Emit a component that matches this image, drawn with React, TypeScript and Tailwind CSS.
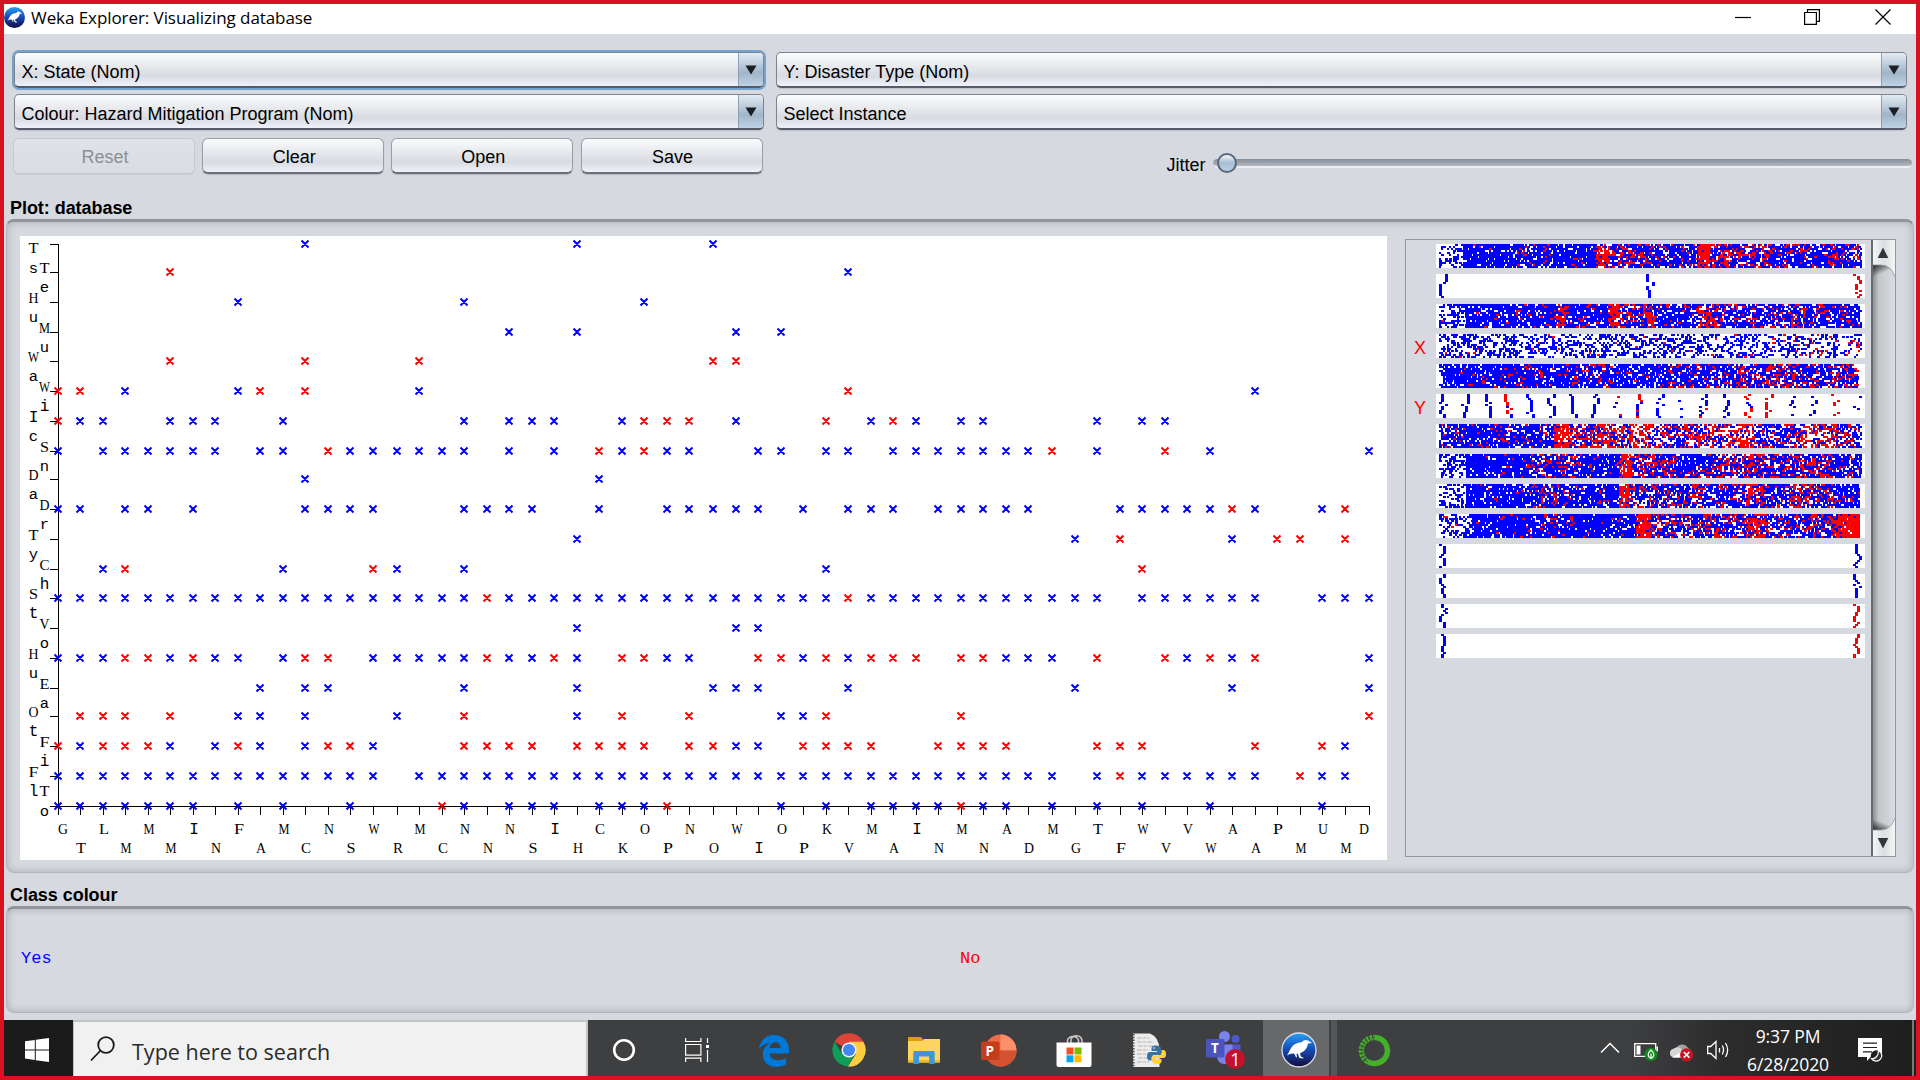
import React from "react";

type Run = [number, number, "B" | "R"];

const rowY = [244, 272, 302, 332, 361, 391, 421, 451, 479, 509, 539, 569, 598, 628, 658, 688, 716, 746, 776, 806];
const colX = Array.from({ length: 59 }, (_, i) => Math.ceil(Math.floor(39 + (i * 874) / 58) * 1.5) - 1);

// Each row lists its columns; "a-b" is a range, a trailing "r" marks the class "No".
const points = [
  "11 23 29",
  "5r 35",
  "8 18 26",
  "20 23 30 32",
  "5r 11r 16r 29r 30r",
  "0r 1r 3 8 9r 11r 16 35r 53",
  "0r 1 2 5-7 10 18 20-22 25 26r-28r 30 34r 36 37r 38 40 41 46 48 49",
  "0 2-7 9 10 12r 13-18 20 22 24r 25 26r 27 28 31 32 34 35 37-43 44r 46 49r 51 58",
  "11 24",
  "0 1 3 4 6 11-14 18-21 24 27-31 33 35-37 39-43 47-51 52r 53 56 57r",
  "23 45 47r 52 54r 55r 57r",
  "2 3r 10 14r 15 18 34 48r",
  "0-18 19r 20-34 35r 36-46 48-53 56-58",
  "23 30 31",
  "0-2 3r 4r 5 6r 7 8 10 11r 12r 14-18 19r 20 21 22r 23 25r 26r 27 28 31r 32r 33 34r 35 36r-38r 40r 41r 42-44 46r 49r 50 51r 52 53r 58",
  "9 11 12 18 23 29-31 35 45 52 58",
  "1r-3r 5r 8 9 11 15 18r 23 25r 28r 32 33 34r 40r 58r",
  "0r 1 2r-4r 5 7 8r 9 11 12r 13r 14 18r-21r 23r-26r 28r 29r 30 31 33r-36r 39r-42r 46r-48r 53r 56r 57",
  "0-14 16-44 46 47r 48-53 55r 56 57",
  "0-6 8 10 13 17r 18 20-22 24-26 27r 32 34 36-39 40r 41 42 44 46 48 51 56",
];

function parseRow(s: string): Run[] {
  return s.split(" ").map((t) => {
    const c = t.includes("r") ? "R" : "B";
    const [a, b] = t.replace(/r/g, "").split("-").map(Number);
    return [a, b ?? a, c];
  });
}

const xLetters = "GTLMMMINFAMCNSWRMCNNNSIHCKOPNOWIOPKVMAINMNADMGTFWVVWAAPMUMD";
const yLabels = ["Ts", "Te", "Hu", "Mu", "Wa", "Wi", "Ic", "Sn", "Da", "Dr", "Ty", "Ch", "St", "Vo", "Hu", "Ea", "Ot", "Fi", "Fl", "To"];

// Capitals are set in the serif at a fixed advance; narrow and lowercase letters use the slab forms of the mono face.
function Glyph({ ch, x, y }: { ch: string; x: number; y: number }) {
  if (/[a-zI]/.test(ch)) {
    return (
      <text x={x + 0.2} y={y} fontFamily="'Liberation Mono', monospace" fontSize={/[aceosunry]/.test(ch) ? 15.5 : 16}>
        {ch}
      </text>
    );
  }
  const w = ch === "S" ? 9 : ch === "M" || ch === "W" ? 11 : 10;
  return (
    <text x={x + (10 - w) / 2} y={y} textLength={w} lengthAdjust="spacingAndGlyphs">
      {ch}
    </text>
  );
}

function Plot() {
  const marks: { B: string; R: string } = { B: "", R: "" };
  points.forEach((s, r) => {
    parseRow(s).forEach(([a, b, c]) => {
      for (let i = a; i <= b; i++) {
        const x = colX[i] - 4;
        const y = rowY[r] - 4;
        marks[c] += `M${x + 0.5} ${y + 0.5}l7 7M${x + 7.5} ${y + 0.5}l-7 7`;
      }
    });
  });
  return (
    <svg width="1367" height="624" viewBox="20 236 1367 624" className="block shrink-0 bg-white">
      <g shapeRendering="crispEdges" fill="#000">
        <rect x="58" y="244" width="1" height="563" />
        <rect x="50" y="806" width="1320" height="1" />
        {rowY.map((y) => (
          <rect key={y} x="50" y={y} width="8" height="1" />
        ))}
        {colX.map((x) => (
          <rect key={x} x={x} y="806" width="1" height="9" />
        ))}
      </g>
      <path d={marks.B} stroke="#0000ff" strokeWidth="2" />
      <path d={marks.R} stroke="#ff0000" strokeWidth="2" />
      <g fontFamily="'Liberation Serif', serif" fontSize="15.500" fill="#000">
        {xLetters.split("").map((ch, i) => (
          <Glyph key={i} ch={ch} x={i === 0 ? 58 : i === 58 ? 1359 : colX[i] - 4} y={i % 2 ? 853 : 834} />
        ))}
        {yLabels.map((l, r) => {
          const x = r % 2 ? 39.5 : 28.5;
          const y = r === 0 ? 253 : r === 19 ? 796 : rowY[r] + 0.5;
          return (
            <React.Fragment key={r}>
              <Glyph ch={l[0]} x={x} y={y} />
              <Glyph ch={l[1]} x={x} y={y + 19.5} />
            </React.Fragment>
          );
        })}
      </g>
    </svg>
  );
}

function rng(seed: number) {
  let a = seed;
  return () => {
    a = (a + 0x6d2b79f5) | 0;
    let t = Math.imul(a ^ (a >>> 15), 1 | a);
    t = (t + Math.imul(t ^ (t >>> 7), 61 | t)) ^ t;
    return ((t ^ (t >>> 14)) >>> 0) / 4294967296;
  };
}

// Dense strips: stops of [x, fill, share of red]; each stop holds until the next one.
type Strip = { kind: "dense"; stops: [number, number, number][] } | { kind: "cols"; cols: [number, number, number][] };

const strips: Strip[] = [
  { kind: "dense", stops: [[3, 0.45, 0], [27, 0.86, 0.01], [75, 0.8, 0.1], [115, 0.85, 0.05], [160, 0.8, 0.75], [174, 0.78, 0.3], [205, 0.82, 0.18], [262, 0.92, 0.85], [274, 0.78, 0.3], [330, 0.8, 0.15], [405, 0.65, 0.2], [424, 0.4, 0.1]] },
  { kind: "cols", cols: [[3, 1, 0], [210, 1, 0.1], [417, 1, 1]] },
  { kind: "dense", stops: [[3, 0.45, 0.02], [30, 0.86, 0.02], [82, 0.82, 0.08], [122, 0.85, 0.6], [130, 0.82, 0.1], [172, 0.8, 0.6], [186, 0.72, 0.3], [205, 0.85, 0.6], [218, 0.78, 0.12], [262, 0.78, 0.5], [282, 0.76, 0.15], [355, 0.78, 0.4], [368, 0.8, 0.12], [424, 0.3, 0]] },
  { kind: "dense", stops: [[3, 0.42, 0.01], [90, 0.36, 0.08], [125, 0.4, 0.02], [290, 0.34, 0.08], [345, 0.3, 0.12], [400, 0.26, 0.25], [424, 0.2, 0]] },
  { kind: "dense", stops: [[3, 0.5, 0], [10, 0.85, 0.02], [62, 0.85, 0.1], [110, 0.82, 0.07], [160, 0.82, 0.2], [176, 0.78, 0.06], [230, 0.78, 0.14], [300, 0.78, 0.3], [360, 0.78, 0.22], [422, 0, 0]] },
  { kind: "cols", cols: [[3, 1, 0], [25, 1, 0], [47, 1, 0.05], [68, 1, 0.65], [90, 1, 0], [111, 1, 0], [133, 1, 0], [155, 1, 0], [177, 0.6, 0.4], [198, 1, 0.6], [220, 0.8, 0], [242, 0.3, 0.2], [263, 1, 0.3], [285, 0.8, 0], [308, 0.9, 0.75], [329, 0.9, 1], [351, 0.5, 0], [373, 0.45, 0], [395, 0.4, 1], [417, 0.4, 0]] },
  { kind: "dense", stops: [[3, 0.7, 0.15], [17, 0.85, 0.05], [50, 0.78, 0.15], [75, 0.76, 0.08], [118, 0.8, 0.85], [132, 0.7, 0.4], [155, 0.72, 0.7], [175, 0.7, 0.35], [195, 0.45, 0.85], [212, 0.6, 0.3], [250, 0.56, 0.5], [300, 0.62, 0.75], [318, 0.66, 0.2], [365, 0.55, 0.6], [400, 0.62, 0.2], [424, 0.3, 0.5]] },
  { kind: "dense", stops: [[3, 0.4, 0], [30, 0.9, 0.02], [85, 0.78, 0.2], [110, 0.8, 0.1], [130, 0.78, 0.25], [145, 0.82, 0.05], [183, 0.85, 0.85], [194, 0.78, 0.3], [240, 0.82, 0.1], [280, 0.76, 0.3], [340, 0.78, 0.28], [395, 0.75, 0.15], [424, 0.3, 0]] },
  { kind: "dense", stops: [[3, 0.4, 0], [30, 0.88, 0.02], [85, 0.82, 0.15], [135, 0.82, 0.05], [183, 0.88, 0.88], [193, 0.7, 0.25], [250, 0.72, 0.2], [310, 0.78, 0.5], [325, 0.76, 0.2], [355, 0.78, 0.5], [375, 0.76, 0.22], [400, 0.8, 0.1], [424, 0.2, 0]] },
  { kind: "dense", stops: [[3, 0.4, 0.02], [36, 0.9, 0.02], [100, 0.84, 0.15], [135, 0.88, 0.05], [200, 0.88, 0.85], [213, 0.76, 0.25], [270, 0.7, 0.25], [310, 0.78, 0.6], [330, 0.74, 0.2], [375, 0.78, 0.35], [398, 0.85, 0.7], [410, 0.93, 0.93], [424, 0, 0]] },
  { kind: "cols", cols: [[3, 1, 0], [417, 1, 0.08]] },
  { kind: "cols", cols: [[3, 1, 0], [417, 1, 0]] },
  { kind: "cols", cols: [[3, 1, 0], [417, 1, 1]] },
  { kind: "cols", cols: [[3, 1, 0], [417, 1, 1]] },
];

function AttributeStrip({ strip, seed }: { strip: Strip; seed: number }) {
  const rand = rng(seed * 7919 + 13);
  let blue = "";
  let red = "";
  const put = (x: number, y: number, w: number, isRed: boolean) => {
    const d = `M${x} ${y}h${w}v2h${-w}z`;
    if (isRed) red += d;
    else blue += d;
  };
  if (strip.kind === "dense") {
    strip.stops.forEach(([x0, fill, share], i) => {
      const x1 = i + 1 < strip.stops.length ? strip.stops[i + 1][0] : 426;
      for (let x = x0; x < x1; x += 2) {
        for (let y = 0; y < 24; y += 2) {
          if (rand() < fill) put(x, y, x < 422 && rand() < 0.5 ? 3 : 2, rand() < share);
        }
      }
    });
  } else {
    strip.cols.forEach(([x0, fill, share]) => {
      let isRed = rand() < share;
      let dx = Math.floor(rand() * 4) * 2;
      for (let y = 0; y < 24; y += 2) {
        if (rand() < 0.4) isRed = rand() < share;
        if (rand() < 0.6) dx = Math.floor(rand() * 4) * 2;
        if (rand() < fill) put(x0 + dx, y, 3, isRed);
      }
    });
  }
  return (
    <svg width="429" height="24" className="block bg-white" shapeRendering="crispEdges">
      <path d={blue} fill="#0000ff" />
      <path d={red} fill="#ff0000" />
    </svg>
  );
}

function Combo({ label, focused = false }: { label: string; focused?: boolean }) {
  return (
    <div
      className={`flex h-9 items-stretch overflow-hidden rounded-[5px] border border-b-2 border-[#7f848c] border-b-[#545b66] bg-linear-to-b from-[#fcfcfd] via-[#d8dbe1] via-70% to-[#eff2fa] ${
        focused ? "shadow-[0_0_0_2px_#73a4d1]" : "shadow-[0_1px_1px_#bcc0c8]"
      }`}
    >
      <span className="flex-1 pt-[4px] pl-[7px] text-[18px] leading-[30px] whitespace-nowrap text-black">{label}</span>
      <span className="flex w-[25px] justify-center border-l border-[#8ba0b5] bg-linear-to-b from-[#e3ecf4] via-[#a1b5c9] via-60% to-[#bfd3e7] pt-[12px]">
        <svg width="12" height="10" viewBox="0 0 12 10">
          <path d="M0.5 0.5h11l-5.500 9z" fill="#1b1f24" />
        </svg>
      </span>
    </div>
  );
}

function Button({ label, disabled = false }: { label: string; disabled?: boolean }) {
  return disabled ? (
    <button className="h-9 w-[182px] rounded-md border border-[#c5c8ce] bg-linear-to-b from-[#dfe2e7] to-[#d9dce3] pt-[2px] pl-[2px] text-[18px] leading-[32px] text-[#8e8f91] shadow-[0_1px_0_#c9ccd2]">
      {label}
    </button>
  ) : (
    <button className="h-9 w-[182px] rounded-md border border-b-2 border-[#9a9da3] border-b-[#6c6f76] bg-linear-to-b from-[#fbfbfc] via-[#d8dbe1] via-70% to-[#eff2fa] pt-[3px] pl-[2px] text-[18px] leading-[30px] text-black shadow-[0_1px_1px_#b9bcc3]">
      {label}
    </button>
  );
}

function WekaIcon({ size, ring = false }: { size: number; ring?: boolean }) {
  const id = `weka${size}`;
  return (
    <svg width={size} height={size} viewBox="0 0 36 36">
      <defs>
        <linearGradient id={id} x1="0" y1="0" x2="0" y2="1">
          <stop offset="0" stopColor="#27a0f5" />
          <stop offset="0.5" stopColor="#1848b4" />
          <stop offset="1" stopColor="#130b38" />
        </linearGradient>
      </defs>
      <circle cx="18" cy="18" r={ring ? 17 : 18} fill={`url(#${id})`} stroke={ring ? "#d8dbe0" : "none"} strokeWidth="1.300" />
      <path
        d="M6 23.500c2-3 3-7 6-10 3-2.600 6-2.600 9-3.400 1.500-2.200 4-2.800 6-1.600l4 2.600-4 .3c-.6 3.600-2.400 7.300-6.500 9l-1.500.8.8 3.300 2.700 1.200-.2.900-4-.6-1.300-4.300-1.500.1.500 3.300-.9.300-1.900-3.800c-2.500-.5-5 .3-7.200 1.900z"
        fill="#fff"
      />
    </svg>
  );
}

function TaskIcon({ children, active = false }: { children: React.ReactNode; active?: boolean }) {
  return active ? (
    <div className="flex h-full w-[75px] justify-start">
      <div className="flex h-full w-[66px] items-center justify-center bg-[#67686a] pt-1 pl-[5px]">{children}</div>
      <div className="ml-[2px] h-full w-[6px] bg-[#555658]" />
    </div>
  ) : (
    <div className="flex h-full w-[75px] items-center justify-center pt-1 pr-[3px]">{children}</div>
  );
}

function Taskbar() {
  return (
    <div className="flex h-14 shrink-0 bg-linear-to-r from-[#3e3f41] from-85% via-[#2c2c2d] via-90% to-[#1e1e1e] font-['Open_Sans','Noto_Sans',sans-serif]">
      <div className="flex w-[69px] items-center justify-center bg-[#1b1b1b] pt-1 pr-[4px]">
        <svg width="24" height="24" viewBox="0 0 24 24" fill="#fff">
          <path d="M0 3.300 9.800 2v9.400H0zM10.800 1.800 24 0v11.400H10.800zM0 12.400h9.800V22L0 20.600zM10.800 12.400H24V24l-13.200-1.800z" />
        </svg>
      </div>
      <div className="flex w-[515px] items-center border-t-2 border-r-2 border-l border-[#c4c4c4] bg-[#f1f1f1]">
        <svg width="26" height="26" viewBox="0 0 26 26" className="ml-[16px]" fill="none" stroke="#1a1a1a" strokeWidth="1.800">
          <circle cx="16" cy="9" r="7.800" />
          <path d="M10.500 14.500 1 24.500" />
        </svg>
        <span className="ml-[16px] pt-[6px] text-[21.500px] tracking-[0.020px] text-[#2b2b2b]">Type here to search</span>
      </div>
      <TaskIcon>
        <svg width="24" height="24" viewBox="0 0 24 24">
          <circle cx="12" cy="12" r="9.800" fill="none" stroke="#fff" strokeWidth="2.600" />
        </svg>
      </TaskIcon>
      <TaskIcon>
        <svg width="25" height="24" viewBox="0 0 25 24" className="mr-[4px]" fill="none" stroke="#fff" strokeWidth="1.200">
          <path d="M.6 0v3.500h15.300V0M.6 6.500h15.300v10.600H.6zM.6 24v-3.900h15.300V24M22.500 0v5M22.500 12v12" />
          <path d="M21 7h3v3h-3z" fill="#fff" stroke="none" />
        </svg>
      </TaskIcon>
      <TaskIcon>
        <svg width="32" height="33" viewBox="0 0 32 33">
          <path
            d="M1 14.500C2.500 5.500 8.500 1 16.500 1 25.500 1 31 7.500 31 16v3.500H11.500c.3 4.500 4 6.700 8.500 6.700 3 0 5.700-.8 8.200-2.200v6.600C25.500 32.200 22 33 18.500 33 10 33 4.800 28 4.800 20.500 4.800 15.500 7.500 11.500 12 9.300 7.500 9.500 3.600 11.500 1 14.500zM11.500 14h11c0-3.500-1.700-5.800-5-5.800-3.200 0-5.400 2.300-6 5.800z"
            fill="#0078d7"
          />
        </svg>
      </TaskIcon>
      <TaskIcon>
        <svg width="34" height="34" viewBox="0 0 34 34">
          <path d="M17 17 2.600 8.700A16.600 16.600 0 0 1 31.400 8.700z" fill="#db4437" />
          <path d="M2.600 8.700A16.600 16.600 0 0 0 16 33.600L23.500 20 9.500 20z" fill="#0f9d58" />
          <path d="M31.400 8.700H17l7 12L16 33.600A16.600 16.600 0 0 0 31.400 8.700z" fill="#ffcd40" />
          <circle cx="17" cy="17" r="7.600" fill="#f1f1f1" />
          <circle cx="17" cy="17" r="6.100" fill="#4285f4" />
        </svg>
      </TaskIcon>
      <TaskIcon>
        <svg width="32" height="27" viewBox="0 0 32 27">
          <path d="M0 0h13l2 2.500V6H0z" fill="#e09c00" />
          <path d="M0 4h14l2-2h16v23.500H0z" fill="#ffd45e" />
          <path d="M0 23h32v2.500H0z" fill="#eeb92c" />
          <path d="M5.300 27V15.500a1.500 1.500 0 0 1 1.500-1.500h18.400a1.500 1.500 0 0 1 1.500 1.500V27h-5.500v-7.500H11V27z" fill="#3a96dd" />
        </svg>
      </TaskIcon>
      <TaskIcon>
        <svg width="36" height="33" viewBox="0 0 36 33">
          <circle cx="19.500" cy="16.500" r="16" fill="#ed6c47" />
          <path d="M19.500.5a16 16 0 0 1 16 16h-16z" fill="#ff8f6b" />
          <path d="M35.500 16.500a16 16 0 0 1-31 5.500l15-5.500z" fill="#d35230" />
          <rect x="0" y="7.500" width="18.500" height="18.500" rx="1.500" fill="#c43e1c" />
          <text x="4.500" y="21.500" fontSize="13.500" fontWeight="700" fill="#fff" fontFamily="'Open Sans', sans-serif">P</text>
        </svg>
      </TaskIcon>
      <TaskIcon>
        <svg width="36" height="35" viewBox="0 0 36 35">
          <path d="M11.500 10V7a6 6 0 0 1 11 0v3M15 10V6a6 6 0 0 1 11 1v3" fill="none" stroke="#c9c9c9" strokeWidth="1.500" />
          <path d="M.5 9.500h35V32a2 2 0 0 1-2 2h-31a2 2 0 0 1-2-2z" fill="#fff" />
          <path d="M10.500 14.500h7v7h-7z" fill="#f25022" />
          <path d="M18.500 14.500h7v7h-7z" fill="#7fba00" />
          <path d="M10.500 22.300h7v7h-7z" fill="#00a4ef" />
          <path d="M18.500 22.300h7v7h-7z" fill="#ffb900" />
        </svg>
      </TaskIcon>
      <TaskIcon>
        <svg width="34" height="35" viewBox="0 0 34 35">
          <path d="M1 .5h17q9 3.500 9.500 16V34H1z" fill="#ececec" />
          <path d="M1.500 1v33" stroke="#444" strokeWidth="2" strokeDasharray="1.400 1.400" />
          <path d="M5 5h12M5 9h17M6 13h15M5 17h11M5 21h9M6 25h9M5 29h12" stroke="#b5b5b5" strokeWidth="1" strokeDasharray="5 1 3 1" />
          <path d="M24 12.500c-4 0-4.500 1.500-4.500 3V18H25v1h-7c-2.500 0-3 2-3 4.500s1 4 3 4h1.500v-2.500c0-2 1.500-3 3-3h4.500c1.500 0 2-1 2-2.500v-4c0-2-1.500-3-5-3z" fill="#3672a4" />
          <path d="M25 31c4 0 4.500-1.500 4.500-3v-2H24v-1h7c2.500 0 3-1.500 3-4s-1-4-3-4h-1.500v2.500c0 2-1.500 3-3 3H22c-1.500 0-2 1-2 2.500v3c0 2 1.500 3 5 3z" fill="#ffd43b" />
          <circle cx="22" cy="15" r="0.800" fill="#fff" />
        </svg>
      </TaskIcon>
      <TaskIcon>
        <svg width="39" height="38" viewBox="0 0 39 38" className="ml-[3px]">
          <circle cx="18.500" cy="5.500" r="5.500" fill="#7b83eb" />
          <circle cx="29.500" cy="8" r="4" fill="#5059c9" />
          <path d="M24 13.500h10.500V22q-1 6-6 6L24 26z" fill="#5059c9" />
          <path d="M11 13.500h15.500V25q-1 8-8 8-6.500 0-7.500-7z" fill="#7b83eb" />
          <rect x="0" y="8" width="18.500" height="18.500" rx="1.500" fill="#4b53bc" />
          <text x="5" y="22" fontSize="13.500" fontWeight="700" fill="#fff" fontFamily="'Open Sans', sans-serif">T</text>
          <circle cx="29" cy="28" r="9.900" fill="#c4112f" />
          <text x="24.300" y="34.500" fontSize="18" fill="#fff" fontFamily="'Open Sans', sans-serif">1</text>
        </svg>
      </TaskIcon>
      <TaskIcon active>
        <WekaIcon size={36} ring />
      </TaskIcon>
      <TaskIcon>
        <svg width="33" height="33" viewBox="0 0 33 33" fill="none">
          <path d="M16.500 3.500a13 13 0 1 1-7 24" stroke="#43b02a" strokeWidth="5.500" />
          <path d="M9.500 27.500a13 13 0 0 1 7-24" stroke="#43b02a" strokeWidth="5.500" strokeDasharray="2.600 1" />
          <path d="M9.500 27.500a13 13 0 0 1 7-24" stroke="#3e3f41" strokeWidth="1" strokeDasharray="1.500 1.500" />
        </svg>
      </TaskIcon>
      <div className="ml-auto flex items-center pt-[4px]">
        <svg width="20" height="12" viewBox="0 0 20 12" className="mb-[4px]" fill="none" stroke="#fff" strokeWidth="1.500">
          <path d="m1 10.500 9-9 9 9" />
        </svg>
        <svg width="26" height="20" viewBox="0 0 26 20" className="mt-[2px] ml-[14px]">
          <path d="M.7 2.700h21v12.600H.7zM23.300 5.500v5" fill="none" stroke="#fff" strokeWidth="1.300" />
          <path d="M2.500 4.500h4v9h-4z" fill="#fff" />
          <circle cx="17" cy="13.300" r="6.500" fill="#0f8a1d" />
          <path d="M17 17.500c-4-2-3.500-5.500 0-8.500 3.500 3 4 6.500 0 8.500zm0 0v-5" fill="none" stroke="#fff" strokeWidth="1.200" />
        </svg>
        <svg width="25" height="21" viewBox="0 0 25 21" className="mt-[2px] ml-[9px]">
          <path d="M7 8a6.500 6.500 0 0 1 12-1c3 1 3 4 2 7H8z" fill="#a2a2a2" />
          <path d="M4.500 16.500a4.500 4.500 0 0 1 0-8.800 5.500 5.500 0 0 1 8.500 1l4 7.800z" fill="#d6d6d6" />
          <path d="M3 16.500l11-6.500 4 6.500z" fill="#fff" />
          <circle cx="17.600" cy="13.800" r="6.600" fill="#cf1126" />
          <path d="m14.800 11 5.600 5.600m0-5.600-5.600 5.600" stroke="#fff" strokeWidth="1.500" />
        </svg>
        <svg width="24" height="20" viewBox="0 0 24 20" className="ml-[13px]" fill="none" stroke="#fff" strokeWidth="1.300">
          <path d="M.7 6.500h3L9 1.500v17l-5.300-5H.7zM12.500 8v4.500M15.300 5.500q2.500 4.500 0 9M18.500 3q4.300 7 0 14" />
        </svg>
        <div className="ml-[12px] flex h-[52px] w-[90px] flex-col items-center text-[17.500px] tracking-[-0.100px] whitespace-nowrap text-white">
          <span className="h-[28px] leading-[24px]">9:37 PM</span>
          <span className="h-[24px] leading-[24px]">6/28/2020</span>
        </div>
        <svg width="25" height="25" viewBox="0 0 25 25" className="ml-[25px]">
          <path d="M0 0h24v19H12.500L9 23v-4H0z" fill="#fff" />
          <path d="M5 5.200h14M5 9.500h14M5 13.800h9" stroke="#1e1e1e" strokeWidth="1.200" />
          <circle cx="18.500" cy="18" r="5.800" fill="#1e1e1e" />
          <path d="M20.500 12.500a5.600 5.600 0 1 1-7 8.200c4 .5 7-3 7-8.200z" fill="#333" stroke="#fff" strokeWidth="1.200" />
        </svg>
        <div className="mt-[-4px] mr-[2px] ml-[29px] h-14 w-[2px] bg-[#77787a]" />
      </div>
    </div>
  );
}

function ScrollBar() {
  return (
    <div className="flex w-[24px] flex-col border-l-2 border-[#696b70] bg-linear-to-r from-[#8f9094] via-[#c4c5c8] via-25% to-[#d9dce1]">
      <svg width="22" height="40" viewBox="0 0 22 40" className="block shrink-0">
        <defs>
          <linearGradient id="trackTop" x1="0" y1="25" x2="7" y2="40" gradientUnits="userSpaceOnUse">
            <stop offset="0" stopColor="#2b2c2f" />
            <stop offset="0.700" stopColor="#2b2c2f" stopOpacity="0" />
          </linearGradient>
          <linearGradient id="arrowFace" x1="0" x2="1">
            <stop offset="0" stopColor="#f4f5f6" />
            <stop offset="0.500" stopColor="#dcdee1" />
            <stop offset="1" stopColor="#f4f5f6" />
          </linearGradient>
        </defs>
        <path d="M0 25h22v15H0z" fill="url(#trackTop)" />
        <path d="M0 0h22v37q-4-12-14-12H0z" fill="url(#arrowFace)" />
        <path d="M0 25h8q10 0 14 12" fill="none" stroke="#8f9094" strokeWidth="0.800" />
        <path d="m10 7.500 5.300 10.500H4.700z" fill="#333639" />
      </svg>
      <div className="flex-1" />
      <svg width="22" height="38" viewBox="0 0 22 38" className="block shrink-0">
        <defs>
          <linearGradient id="trackBottom" x1="0" y1="12" x2="4" y2="2" gradientUnits="userSpaceOnUse">
            <stop offset="0" stopColor="#2b2c2f" />
            <stop offset="1" stopColor="#2b2c2f" stopOpacity="0" />
          </linearGradient>
        </defs>
        <path d="M0 0h22L18 12H0z" fill="url(#trackBottom)" />
        <path d="M0 38h22V0q-4 12-14 12H0z" fill="url(#arrowFace)" />
        <path d="M0 12h8Q18 12 22 0" fill="none" stroke="#9a9b9f" strokeWidth="0.800" />
        <path d="m10 30.500 5.300-10.500H4.700z" fill="#333639" />
      </svg>
    </div>
  );
}

export default function App() {
  return (
    <div className="flex h-[1080px] w-[1920px] flex-col overflow-hidden border-4 border-[#d81221] bg-[#d6d9e0] font-['Liberation_Sans',Arial,sans-serif] text-black">
      <header className="flex h-[30px] shrink-0 items-center bg-white">
        <div className="mt-[-4px]">
          <WekaIcon size={21} />
        </div>
        <span className="ml-[6px] pb-[3px] font-['Open_Sans','Noto_Sans',sans-serif] text-[17px] tracking-[-0.070px]">Weka Explorer: Visualizing database</span>
        <div className="mt-[-5px] mr-[25px] ml-auto flex items-center">
          <svg width="16" height="16" fill="none" stroke="#000" strokeWidth="1.200">
            <path d="M0 8.500h16" />
          </svg>
          <svg width="16" height="16" viewBox="0 0 16 16" className="ml-[53px]" fill="none" stroke="#000" strokeWidth="1.200">
            <path d="M.6 3.500h11.800v11.900H.6zM3.500 3.500V.6h11.900v11.800h-3" />
          </svg>
          <svg width="16" height="16" viewBox="0 0 16 16" className="ml-[55px]" stroke="#000" strokeWidth="1.200">
            <path d="m.5.5 15 15m0-15-15 15" />
          </svg>
        </div>
      </header>

      <div className="grid shrink-0 grid-cols-[750px_1131px] gap-x-[12px] gap-y-[6px] pt-[18px] pl-[9.500px]">
        <Combo label="X: State (Nom)" focused />
        <Combo label="Y: Disaster Type (Nom)" />
        <Combo label="Colour: Hazard Mitigation Program (Nom)" />
        <Combo label="Select Instance" />
      </div>
      <div className="flex h-[61px] shrink-0 pt-[8px] pl-[9px]">
        <div className="flex gap-[7.200px]">
          <Button label="Reset" disabled />
          <Button label="Clear" />
          <Button label="Open" />
          <Button label="Save" />
        </div>
        <div className="ml-[404px] flex h-[51px] items-center">
          <span className="pt-[3px] text-[18px]">Jitter</span>
          <div className="ml-[7px] flex h-[9px] w-[699px] items-center rounded-full border-b-2 border-[#eceef2] bg-linear-to-b from-[#868d97] to-[#b4bac4] pl-[4px]">
            <div className="size-5 shrink-0 rounded-full border-2 border-[#56687d] bg-linear-to-b from-[#f3f6f9] via-[#a9bdd0] to-[#bcd0e4]" />
          </div>
        </div>
      </div>

      <h2 className="mt-[6px] h-[22px] w-[131px] shrink-0 overflow-hidden pl-[6px] text-[18px] leading-[22px] font-bold tracking-[-0.050px] whitespace-nowrap">Plot: database</h2>
      <section className="mr-[2px] ml-[2px] flex h-[654px] shrink-0 rounded-[8px] border border-t-3 border-[#b2b5ba] border-t-[#929499] pt-[14px] pl-[13px] shadow-[inset_0_0_8px_#a9acb2]">
        <Plot />
        <div className="mt-[3px] ml-[18px] flex h-[618px] w-[491px] justify-between border border-[#9196a1]">
          <div className="flex flex-col gap-[6px] pt-[4px]">
            {strips.map((s, i) => (
              <div key={i} className="flex h-6">
                <span className="w-[30px] pl-[8px] font-['Liberation_Sans'] text-[18px] leading-[29px] text-[#ff0000]">{i === 3 ? "X" : i === 5 ? "Y" : ""}</span>
                <AttributeStrip strip={s} seed={i + 1} />
              </div>
            ))}
          </div>
          <ScrollBar />
        </div>
      </section>

      <h2 className="mt-[11px] h-[22px] w-[117px] shrink-0 overflow-hidden pl-[6px] text-[18px] leading-[22px] font-bold tracking-[-0.050px] whitespace-nowrap">Class colour</h2>
      <section className="mr-[2px] ml-[2px] flex h-[107px] shrink-0 items-center rounded-[8px] border border-t-3 border-[#b2b5ba] border-t-[#929499] pb-[4px] pl-[14px] font-['Liberation_Mono',monospace] text-[17px] shadow-[inset_0_0_8px_#a9acb2]">
        <span className="w-[939px] text-[#0000ff]">Yes</span>
        <span className="text-[#ff0000]">No</span>
      </section>
      <div className="flex-1" />
      <Taskbar />
    </div>
  );
}
